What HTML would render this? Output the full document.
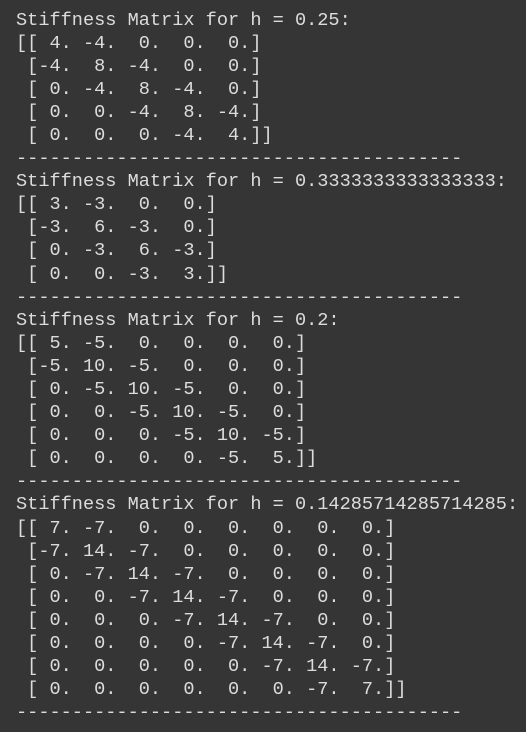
<!DOCTYPE html>
<html><head><meta charset="utf-8"><style>
html,body{margin:0;padding:0;background:#353535;width:526px;height:732px;overflow:hidden}
pre{margin:0;padding:8.5px 0 0 16px;font-family:"Liberation Mono",monospace;font-size:18.6px;line-height:23.1px;color:#dcdcdc;white-space:pre}
</style></head><body><pre>Stiffness Matrix for h = 0.25:
[[ 4. -4.  0.  0.  0.]
 [-4.  8. -4.  0.  0.]
 [ 0. -4.  8. -4.  0.]
 [ 0.  0. -4.  8. -4.]
 [ 0.  0.  0. -4.  4.]]
----------------------------------------
Stiffness Matrix for h = 0.3333333333333333:
[[ 3. -3.  0.  0.]
 [-3.  6. -3.  0.]
 [ 0. -3.  6. -3.]
 [ 0.  0. -3.  3.]]
----------------------------------------
Stiffness Matrix for h = 0.2:
[[ 5. -5.  0.  0.  0.  0.]
 [-5. 10. -5.  0.  0.  0.]
 [ 0. -5. 10. -5.  0.  0.]
 [ 0.  0. -5. 10. -5.  0.]
 [ 0.  0.  0. -5. 10. -5.]
 [ 0.  0.  0.  0. -5.  5.]]
----------------------------------------
Stiffness Matrix for h = 0.14285714285714285:
[[ 7. -7.  0.  0.  0.  0.  0.  0.]
 [-7. 14. -7.  0.  0.  0.  0.  0.]
 [ 0. -7. 14. -7.  0.  0.  0.  0.]
 [ 0.  0. -7. 14. -7.  0.  0.  0.]
 [ 0.  0.  0. -7. 14. -7.  0.  0.]
 [ 0.  0.  0.  0. -7. 14. -7.  0.]
 [ 0.  0.  0.  0.  0. -7. 14. -7.]
 [ 0.  0.  0.  0.  0.  0. -7.  7.]]
----------------------------------------</pre></body></html>
